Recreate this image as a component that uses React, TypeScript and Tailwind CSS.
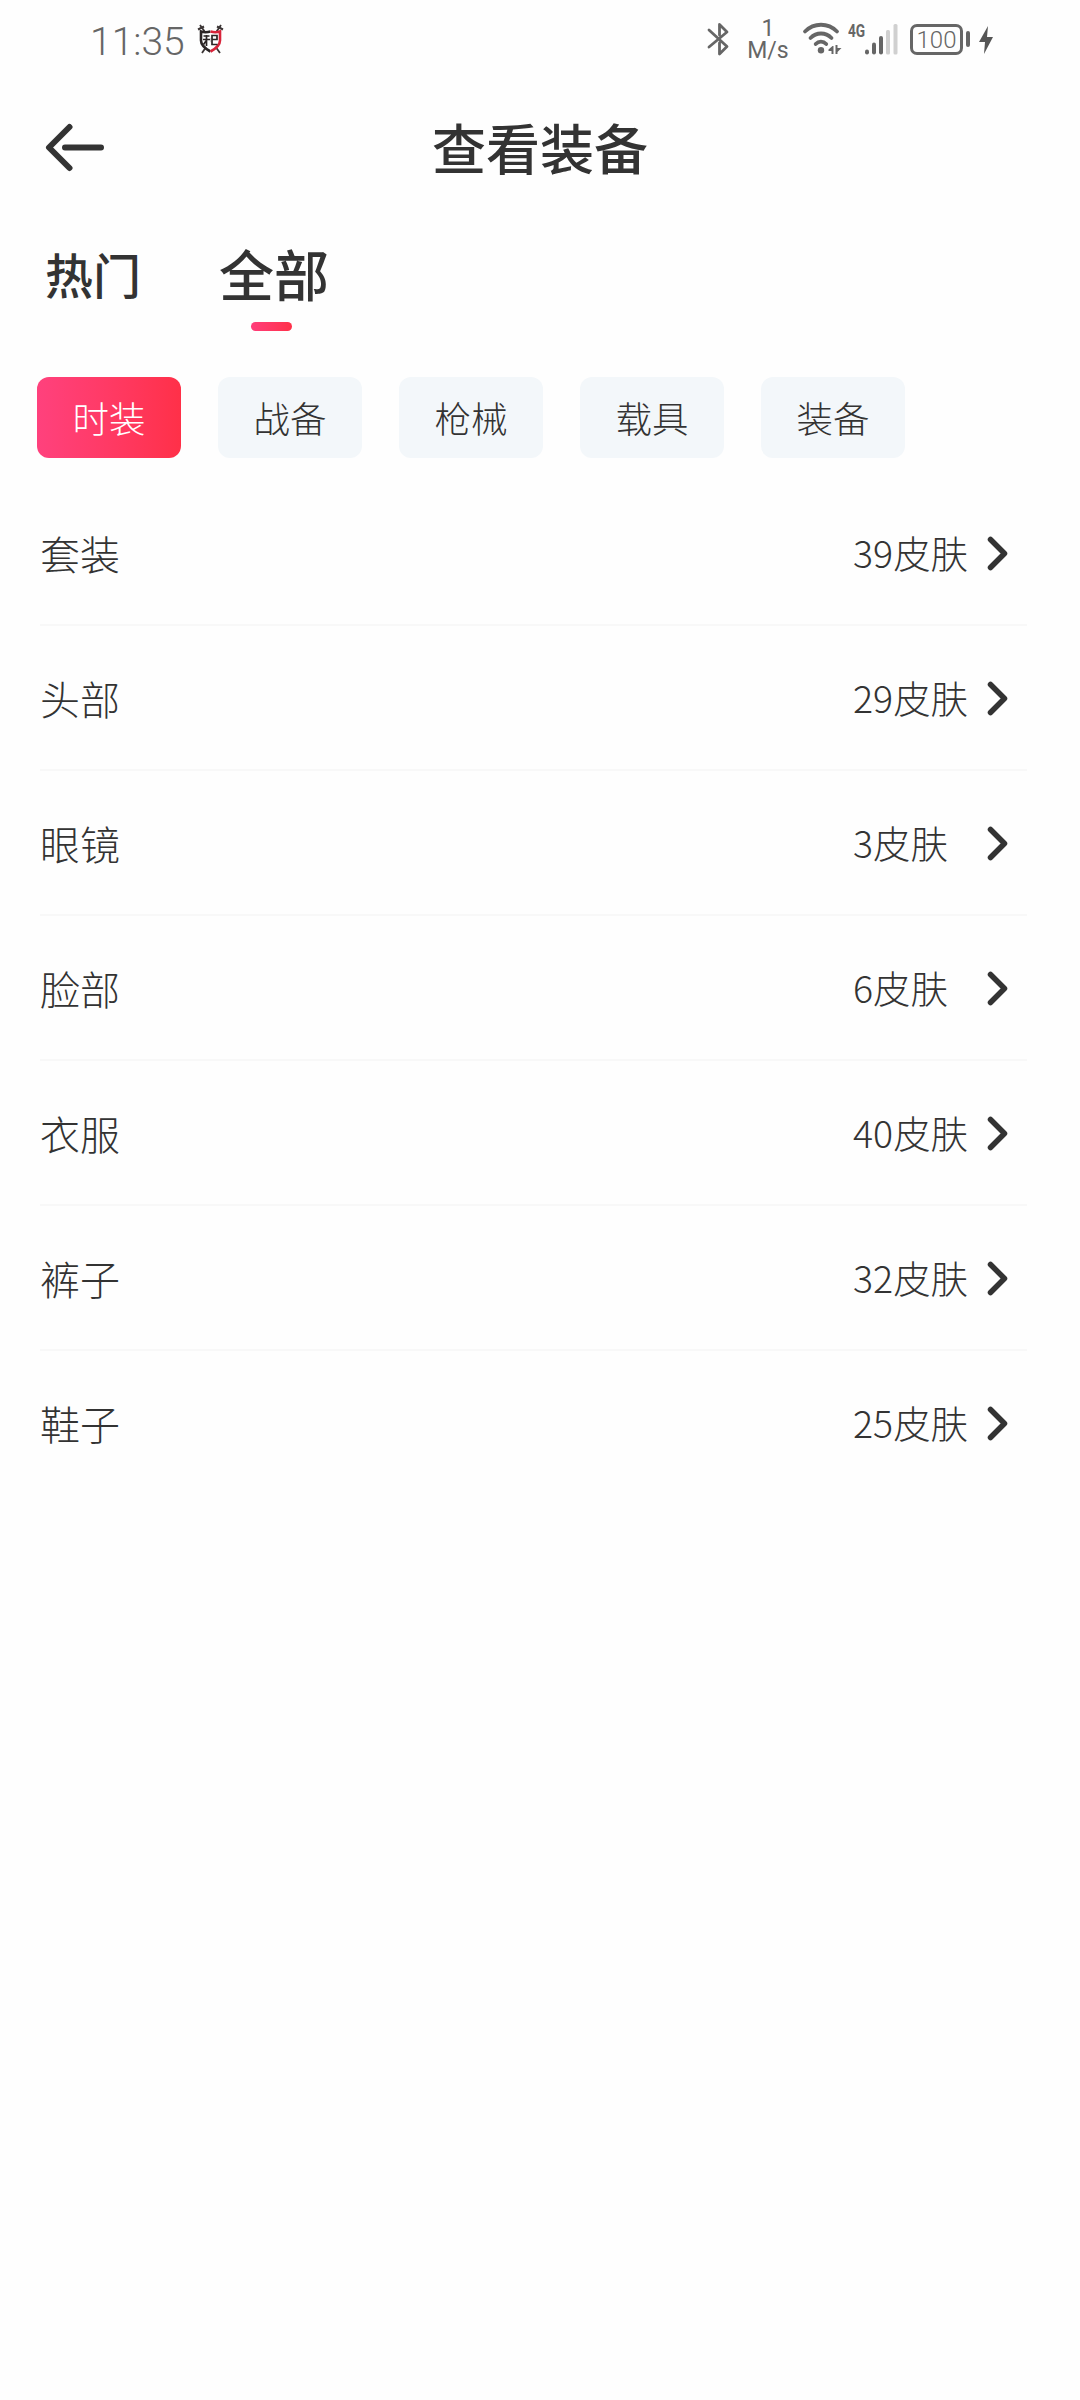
import React, { useState } from "react"
import clsx from "clsx"

const tabs = ["热门", "全部"]

const categories = ["时装", "战备", "枪械", "载具", "装备"]

const skins = [
	{ name: "套装", count: 39 },
	{ name: "头部", count: 29 },
	{ name: "眼镜", count: 3 },
	{ name: "脸部", count: 6 },
	{ name: "衣服", count: 40 },
	{ name: "裤子", count: 32 },
	{ name: "鞋子", count: 25 },
]

const CrestIcon = () => (
	<svg width="28" height="32" viewBox="0 0 28 32" fill="none">
		{/* swords */}
		<path d="M3 2l20 28M24 2L5 30" stroke="#3b3535" strokeWidth="1.800" />
		<path d="M1 6.500l6-3M26 6.500l-6-3" stroke="#3b3535" strokeWidth="2" />
		{/* shield */}
		<path
			d="M13.500 8.500C10 9.500 7 9.500 4 8.500v9c0 5 4 8 9.500 11"
			fill="#fff"
			stroke="#2b2525"
			strokeWidth="2.600"
		/>
		<path
			d="M13.500 8.500c3.500 1 6.500 1 9.500 0v9c0 5-4 8-9.500 11"
			fill="#fff"
			stroke="#d8243a"
			strokeWidth="2.600"
		/>
		<path
			d="M6.500 13h6M9.500 12v11M6 16.500h7M9 18l-2.500 3.500M15 12.500h5v4h-5zM15 16.500v5h5.500"
			stroke="#2b2525"
			strokeWidth="1.700"
		/>
	</svg>
)

const BluetoothIcon = () => (
	<svg width="24" height="36" viewBox="0 0 24 36" fill="none">
		<path
			d="M2 9l18 16.500-7.500 7.500V22M12.500 14V3.500L20 11 2 26"
			stroke="#666"
			strokeWidth="2.800"
			strokeLinejoin="round"
			strokeLinecap="round"
		/>
	</svg>
)

const WifiIcon = () => (
	<svg width="40" height="34" viewBox="0 0 40 34" fill="none">
		<g stroke="#666" strokeWidth="3.800" strokeLinecap="round">
			<path d="M3 9.500C12 0.500 26 0.500 35 9.500" />
			<path d="M8.500 16c6-6 15-6 21 0" />
			<path d="M13.700 22c3-3.200 7.500-3.200 10.500 0" />
		</g>
		<circle cx="19" cy="28.300" r="3.200" fill="#666" />
		<path d="M31.500 24v8h-2v-3h-3v-1.500l4-3.500zM33.500 32v-9h2v3h4l-4 4v2z" fill="#666" />
	</svg>
)

const SignalIcon = () => (
	<svg width="34" height="32" viewBox="0 0 34 32">
		<rect x="0" y="25.500" width="4" height="5" rx="2" fill="#666" />
		<rect x="7" y="18.500" width="4" height="12" rx="2" fill="#666" />
		<rect x="14" y="12" width="4" height="18.500" rx="2" fill="#666" />
		<rect x="21" y="6" width="4" height="24.500" rx="1.500" fill="#d0d0d0" />
		<rect x="28.500" y="0" width="4" height="30.500" rx="1.500" fill="#d0d0d0" />
	</svg>
)

const StatusBar = () => (
	<div className="flex h-20 items-start pl-[90px] text-[#666]">
		<span className="mt-[23px] w-[107px] font-['Roboto'] text-[39px] leading-[38px] font-light whitespace-nowrap">
			11:35
		</span>
		<span className="mt-[23px]">
			<CrestIcon />
		</span>
		<span className="mt-[21px] ml-[482px]">
			<BluetoothIcon />
		</span>
		<div className="mt-[18px] ml-[16px] flex w-[42px] flex-col items-center font-['Roboto'] text-[23px] leading-[22px]">
			<span>1</span>
			<span>M/s</span>
		</div>
		<span className="mt-[22px] ml-[13px]">
			<WifiIcon />
		</span>
		<span className="mt-[22px] ml-[6px] w-[17px] origin-left scale-x-[0.76] font-['Roboto'] text-[18px] leading-[18px] font-bold">
			4G
		</span>
		<span className="mt-[24px]">
			<SignalIcon />
		</span>
		<div className="mt-[24px] ml-[11px] flex h-[31px] w-[53px] items-center justify-center rounded-[7px] border-3 border-[#666] pt-px font-['Roboto'] text-[24px] leading-none font-light">
			100
		</div>
		<div className="mt-[31px] ml-[3px] h-[16px] w-[4px] rounded-sm bg-[#666]" />
		<svg className="mt-[26px] ml-[9px]" width="15" height="28" viewBox="0 0 15 28">
			<path d="M9 0L0 16h6L5 28l9-17H8z" fill="#555" />
		</svg>
	</div>
)

const Header = () => (
	<header className="flex h-[132px] items-center pl-[43px]">
		<button className="w-[62px]">
			<svg width="62" height="52" viewBox="0 0 62 52" fill="none">
				<path
					d="M26.500 7L6 27.500 26.500 48M22 27.500h36"
					stroke="#333"
					strokeWidth="6"
					strokeLinecap="round"
					strokeLinejoin="round"
				/>
			</svg>
		</button>
		<h1 className="mr-[105px] flex-1 text-center text-[54px] font-medium">查看装备</h1>
	</header>
)

const App = () => {
	const [activeTab, setActiveTab] = useState("全部")
	const [activeCategory, setActiveCategory] = useState("时装")

	return (
		<div className="min-h-[2400px] w-[1080px] bg-[#fefefe] font-['Noto_Sans_CJK_SC',sans-serif] text-[#333]">
			<StatusBar />
			<Header />

			{/* TABS */}
			<nav className="flex h-[126px] gap-[78px] pl-[45px]">
				{tabs.map((tab) => (
					<button
						key={tab}
						onClick={() => setActiveTab(tab)}
						className="flex flex-col items-center font-medium"
					>
						<span
							className={clsx(
								"flex h-[110px] items-center pt-[11px]",
								tab === activeTab ? "text-[55px]" : "text-[48px]"
							)}
						>
							{tab}
						</span>
						{tab === activeTab && (
							<span className="mr-[5px] h-[9px] w-[41px] rounded-full bg-linear-to-r from-[#ff3d7a] to-[#ff3048]" />
						)}
					</button>
				))}
			</nav>

			{/* CATEGORIES */}
			<div className="mt-[39px] flex gap-[37px] pl-[37px]">
				{categories.map((category) => (
					<button
						key={category}
						onClick={() => setActiveCategory(category)}
						className={clsx(
							"flex h-[81px] w-[144px] items-center justify-center rounded-xl pt-px text-[36.500px] font-light",
							category === activeCategory
								? "bg-linear-to-r from-[#ff417d] to-[#ff3048] text-white"
								: "bg-[#f3f7fa]"
						)}
					>
						{category}
					</button>
				))}
			</div>

			{/* SKIN LIST */}
			<ul className="mt-[23px] mr-[53px] ml-[40px]">
				{skins.map((skin) => (
					<li
						key={skin.name}
						className="flex h-[145px] items-center border-b-2 border-[#f8f8f8] font-light last:border-transparent"
					>
						<span className="flex-1 text-[40px]">{skin.name}</span>
						<span className="w-[134px] pb-px text-[37.500px] whitespace-nowrap">{skin.count}皮肤</span>
						<svg width="40" height="38" viewBox="0 0 40 38" fill="none">
							<path
								d="M3.500 5.500l14 14-14 14"
								stroke="#333"
								strokeWidth="5.500"
								strokeLinecap="round"
								strokeLinejoin="round"
							/>
						</svg>
					</li>
				))}
			</ul>
		</div>
	)
}

export default App
